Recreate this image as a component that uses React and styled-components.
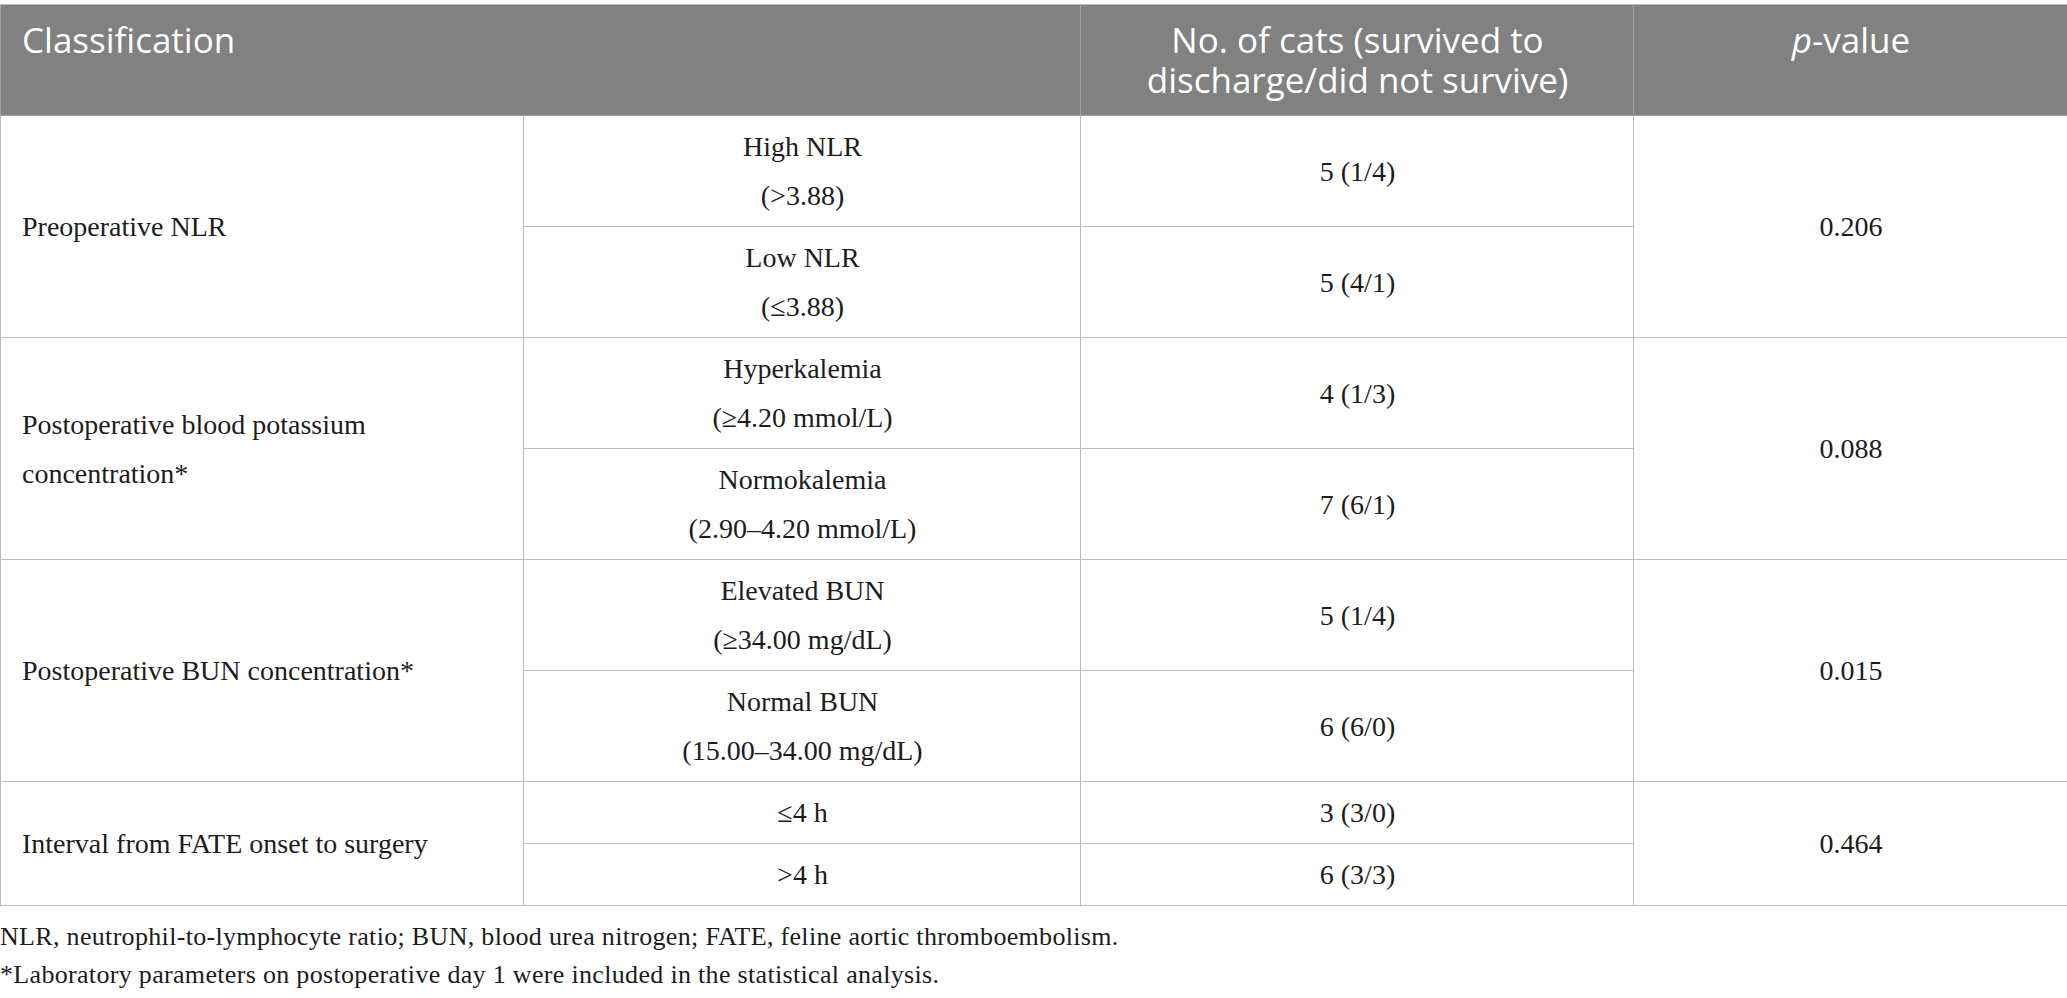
import React from "react";
import styled, { createGlobalStyle } from "styled-components";

const GlobalStyle = createGlobalStyle`
  html, body {
    margin: 0;
    padding: 0;
    background: #ffffff;
  }
`;

const rows = [
  {
    label: "Preoperative NLR",
    p: "0.206",
    groups: [
      { name: ["High NLR", "(>3.88)"], count: "5 (1/4)" },
      { name: ["Low NLR", "(≤3.88)"], count: "5 (4/1)" },
    ],
  },
  {
    label: ["Postoperative blood potassium", "concentration*"],
    p: "0.088",
    groups: [
      { name: ["Hyperkalemia", "(≥4.20 mmol/L)"], count: "4 (1/3)" },
      { name: ["Normokalemia", "(2.90–4.20 mmol/L)"], count: "7 (6/1)" },
    ],
  },
  {
    label: "Postoperative BUN concentration*",
    p: "0.015",
    groups: [
      { name: ["Elevated BUN", "(≥34.00 mg/dL)"], count: "5 (1/4)" },
      { name: ["Normal BUN", "(15.00–34.00 mg/dL)"], count: "6 (6/0)" },
    ],
  },
  {
    label: "Interval from FATE onset to surgery",
    p: "0.464",
    groups: [
      { name: ["≤4 h"], count: "3 (3/0)" },
      { name: [">4 h"], count: "6 (3/3)" },
    ],
  },
];

// splits a list of lines into text with <br /> between them
const lines = (value) =>
  (Array.isArray(value) ? value : [value]).map((n, k) => (
    <React.Fragment key={k}>
      {k > 0 && <br />}
      {n}
    </React.Fragment>
  ));

export default function App() {
  return (
    <Page>
      <GlobalStyle />
      <Table>
        <colgroup>
          <col style={{ width: "523px" }} />
          <col style={{ width: "557px" }} />
          <col style={{ width: "553px" }} />
          <col style={{ width: "434px" }} />
        </colgroup>
        <thead>
          <tr>
            <HeadCell colSpan={2}>Classification</HeadCell>
            <HeadCell $center>
              <HeadLine>No. of cats (survived to</HeadLine>
              <HeadLine>discharge/did not survive)</HeadLine>
            </HeadCell>
            <HeadCell $center>
              <HeadLine>
                <i>p</i>-value
              </HeadLine>
            </HeadCell>
          </tr>
        </thead>
        <tbody>
          {rows.map((row) =>
            row.groups.map((g, i) => (
              <tr key={row.p + i}>
                {i === 0 && <Cell rowSpan={2}>{lines(row.label)}</Cell>}
                <Cell $center>{lines(g.name)}</Cell>
                <Cell $center>{g.count}</Cell>
                {i === 0 && (
                  <Cell rowSpan={2} $center>
                    {row.p}
                  </Cell>
                )}
              </tr>
            ))
          )}
        </tbody>
      </Table>
      <Notes>
        <p>
          NLR, neutrophil-to-lymphocyte ratio; BUN, blood urea nitrogen; FATE,
          feline aortic thromboembolism.
        </p>
        <p>
          *Laboratory parameters on postoperative day 1 were included in the
          statistical analysis.
        </p>
      </Notes>
    </Page>
  );
}

const Page = styled.div`
  width: 2067px;
  padding-top: 4px;
  box-sizing: border-box;
`;

const Table = styled.table`
  width: 2067px;
  border-collapse: collapse;
  table-layout: fixed;
  border: 1px solid #bdbdbd;
`;

const HeadCell = styled.th`
  background: #808180;
  color: #ffffff;
  font-family: "Open Sans", "Noto Sans", sans-serif;
  font-weight: 400;
  font-size: 35px;
  line-height: 40px;
  text-align: ${(p) => (p.$center ? "center" : "left")};
  vertical-align: top;
  padding: 15px 20px 15px 21px;
  border: 1px solid #a3a3a3;
  border-top-color: #bdbdbd;

  i {
    font-style: italic;
  }
`;

const HeadLine = styled.div`
  height: 40px;
  white-space: nowrap;
`;

const Cell = styled.td`
  font-family: "Liberation Serif", "Times New Roman", serif;
  font-size: 28px;
  line-height: 49px;
  color: #1c1c1c;
  text-align: ${(p) => (p.$center ? "center" : "left")};
  vertical-align: middle;
  padding: 6px 20px 6px 21px;
  border: 1px solid #bdbdbd;
`;

const Notes = styled.div`
  margin-top: 12px;
  font-family: "Liberation Serif", "Times New Roman", serif;
  font-size: 26px;
  letter-spacing: 0.32px;
  line-height: 38px;
  color: #1c1c1c;

  p {
    margin: 0;
  }
`;
